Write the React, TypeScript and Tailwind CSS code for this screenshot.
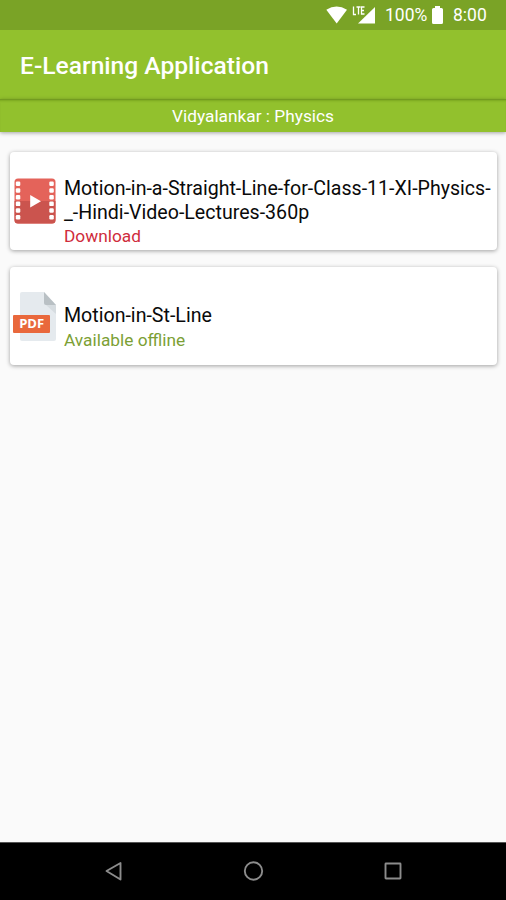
import React from 'react';

type FileKind = 'video' | 'pdf';

interface LectureFile {
  name: string[];
  kind: FileKind;
  offline: boolean;
}

const files: LectureFile[] = [
  {
    name: ['Motion-in-a-Straight-Line-for-Class-11-XI-Physics-', '_-Hindi-Video-Lectures-360p'],
    kind: 'video',
    offline: false,
  },
  { name: ['Motion-in-St-Line'], kind: 'pdf', offline: true },
];

function VideoIcon() {
  const holes = [3.5, 10.2, 16.9, 23.6, 30.3, 37];

  return (
    <svg className="h-[46px] w-[42px]" viewBox="0 0 42 46">
      <rect x="0.5" y="0.5" width="41" height="45" rx="3.5" fill="#e4635a" />
      <path d="M.5 23h41v19a3.5 3.5 0 0 1-3.5 3.5H4A3.5 3.5 0 0 1 .5 42Z" fill="#cb544e" />
      {holes.map((y) => (
        <g key={y} fill="#fff">
          <rect x="1.8" y={y} width="4.5" height="4.5" rx="1.2" />
          <rect x="35.3" y={y} width="4.5" height="4.5" rx="1.2" />
        </g>
      ))}
      <path d="M16.2 17v12.5L27 23.2Z" fill="#fff" />
    </svg>
  );
}

function PdfIcon() {
  return (
    <svg className="h-[49px] w-[44px]" viewBox="0 0 44 49">
      <path d="M9 0h22l12 13v34a2 2 0 0 1-2 2H9a2 2 0 0 1-2-2V2a2 2 0 0 1 2-2Z" fill="#e5eaee" />
      <path d="M33 13h10v9Z" fill="#d6dce0" />
      <path d="M31 0l12 13H33a2 2 0 0 1-2-2Z" fill="#b9c0c4" />
      <rect x="0" y="23" width="37" height="18" rx="1" fill="#e9683c" />
      <text
        x="18.700"
        y="36.300"
        textAnchor="middle"
        fontFamily="Open Sans, sans-serif"
        fontSize="12"
        fontWeight="700"
        textLength="25"
        lengthAdjust="spacingAndGlyphs"
        fill="#fff"
      >
        PDF
      </text>
    </svg>
  );
}

function StatusBar() {
  return (
    <div className="flex h-[30px] items-center justify-end bg-[#7aa326] pt-px pr-[19px] text-[17.5px] text-white">
      <svg className="-mt-px h-[30px] w-[50px]" viewBox="326 0 50 30" fill="#fff">
        <path d="M326.3 9.8Q336.6 3 347 9.8L336.7 23.5Z" />
        <path d="M375 7v16.5h-17Z" />
        <path
          d="M353.5 6.5v8h2.5M356.5 7h4M358.5 7v7.5M364.5 7h-3v7h3M361.5 10.5h2.5"
          fill="none"
          stroke="#fff"
          strokeWidth="1.3"
        />
      </svg>
      <span className="ml-[9px] w-[43px] whitespace-nowrap">100%</span>
      <svg className="-mt-px ml-[4px] h-[18px] w-[11px]" viewBox="0 0 11 18" fill="#fff">
        <path d="M3 0h5v2h1.5A1.5 1.5 0 0 1 11 3.5v13A1.5 1.5 0 0 1 9.5 18h-8A1.5 1.5 0 0 1 0 16.5v-13A1.5 1.5 0 0 1 1.5 2H3Z" />
      </svg>
      <span className="ml-[10px] w-[34px] whitespace-nowrap">8:00</span>
    </div>
  );
}

function FileCard({ file }: { file: LectureFile }) {
  return (
    <div className="flex h-[98px] rounded-[4px] bg-white pl-[3px] shadow-[0_1px_4px_rgba(0,0,0,0.36)]">
      <div className={`w-[51px] shrink-0 ${file.kind === 'video' ? 'pt-[26px] pl-px' : 'pt-[25px]'}`}>
        {file.kind === 'video' ? <VideoIcon /> : <PdfIcon />}
      </div>
      <div className={file.kind === 'video' ? 'pt-[25px]' : 'pt-[37px]'}>
        {file.name.map((line) => (
          <p key={line} className="text-[19.6px] leading-[23.5px] whitespace-nowrap text-[#0a0a0a]">
            {line}
          </p>
        ))}
        <p
          className={`text-[17.3px] leading-[25px] whitespace-nowrap ${
            file.offline ? 'text-[#7c9f35]' : 'text-[#cf2c3c]'
          }`}
        >
          {file.offline ? 'Available offline' : 'Download'}
        </p>
      </div>
    </div>
  );
}

function NavigationBar() {
  return (
    <nav className="flex h-[58px] justify-center border-t border-[#555] bg-black">
      <svg className="h-[57px] w-[300px]" viewBox="103 843 300 57" fill="none" stroke="#8c8c8c" strokeWidth="1.9">
        <path d="M120.5 863v16.5L106.5 871Z" strokeLinejoin="round" />
        <circle cx="253.5" cy="871" r="8.7" />
        <rect x="385.5" y="863.5" width="15" height="15" rx="0.5" />
      </svg>
    </nav>
  );
}

export default function App() {
  return (
    <div className="flex h-[900px] w-[506px] flex-col overflow-hidden bg-[#fafafa] font-['Roboto',sans-serif]">
      <StatusBar />
      <header className="flex h-[69px] items-center bg-[#92c12d] pl-5 text-white">
        <h1 className="pt-1 text-[24.6px] font-medium whitespace-nowrap">E-Learning Application</h1>
      </header>
      <div className="h-[33px] border-t border-[#729b20] bg-[#92c12d] text-center text-[17.3px] leading-[33px] text-white shadow-[0_1px_4px_rgba(0,0,0,0.35),inset_0_2px_2px_-1px_rgba(70,110,0,0.3)]">
        Vidyalankar : Physics
      </div>
      <main className="flex flex-1 flex-col gap-[17px] pt-5 pr-[9px] pl-[10px]">
        {files.map((file) => (
          <FileCard key={file.name[0]} file={file} />
        ))}
      </main>
      <NavigationBar />
    </div>
  );
}
